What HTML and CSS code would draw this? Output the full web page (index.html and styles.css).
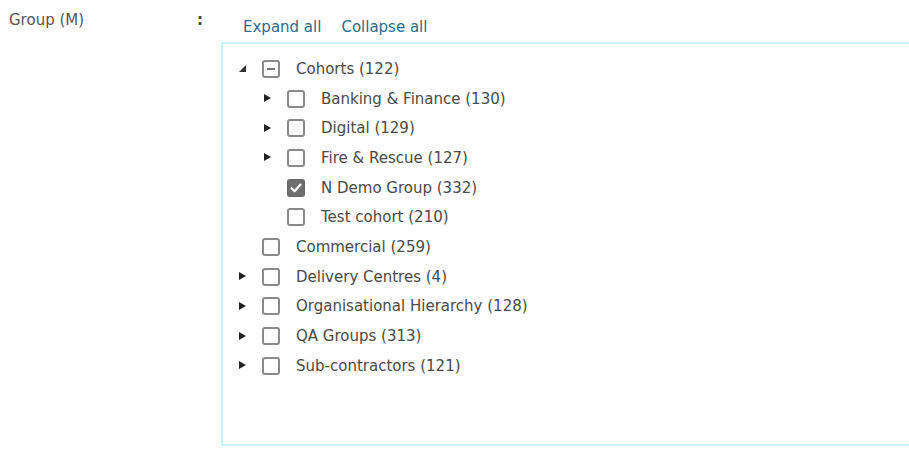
FILE: index.html
```html
<!DOCTYPE html>
<html>
<head>
<meta charset="utf-8">
<link rel="stylesheet" href="styles.css">
</head>
<body>
<div class="field">
  <div class="label">Group (M)</div>
  <div class="colon">:</div>
  <div class="content">
    <div class="links"><a class="link">Expand all</a><a class="link">Collapse all</a></div>
    <div class="tree-box">
      <ul class="tree">
        <li>
          <div class="node"><span class="tog open"></span><span class="cb partial"></span><span class="txt">Cohorts (122)</span></div>
          <ul class="tree sub">
            <li><div class="node"><span class="tog closed"></span><span class="cb"></span><span class="txt">Banking &amp; Finance (130)</span></div></li>
            <li><div class="node"><span class="tog closed"></span><span class="cb"></span><span class="txt">Digital (129)</span></div></li>
            <li><div class="node"><span class="tog closed"></span><span class="cb"></span><span class="txt">Fire &amp; Rescue (127)</span></div></li>
            <li><div class="node"><span class="tog"></span><span class="cb checked"><svg viewBox="0 0 18 18" width="18" height="18"><path d="M4.5 9.2 L7.6 12.3 L13.5 5.6" fill="none" stroke="#fff" stroke-width="2.2" stroke-linecap="round" stroke-linejoin="round"/></svg></span><span class="txt">N Demo Group (332)</span></div></li>
            <li><div class="node"><span class="tog"></span><span class="cb"></span><span class="txt">Test cohort (210)</span></div></li>
          </ul>
        </li>
        <li><div class="node"><span class="tog"></span><span class="cb"></span><span class="txt">Commercial (259)</span></div></li>
        <li><div class="node"><span class="tog closed"></span><span class="cb"></span><span class="txt">Delivery Centres (4)</span></div></li>
        <li><div class="node"><span class="tog closed"></span><span class="cb"></span><span class="txt">Organisational Hierarchy (128)</span></div></li>
        <li><div class="node"><span class="tog closed"></span><span class="cb"></span><span class="txt">QA Groups (313)</span></div></li>
        <li><div class="node"><span class="tog closed"></span><span class="cb"></span><span class="txt">Sub-contractors (121)</span></div></li>
      </ul>
    </div>
  </div>
</div>
</body>
</html>
```
FILE: styles.css
```css
html, body {
  margin: 0;
  padding: 0;
  background: #fff;
  overflow: hidden;
}
body {
  font-family: "DejaVu Sans", Verdana, sans-serif;
  font-size: 15px;
  color: #4a4a4a;
}
.field {
  display: grid;
  grid-template-columns: 188px 24px 1fr;
  padding-left: 9px;
  padding-top: 10px;
}
.label {
  color: #555;
  line-height: 20px;
}
.colon {
  color: #444;
  font-weight: bold;
  line-height: 20px;
}
.content {
  margin-right: -30px;
}
.links {
  display: flex;
  gap: 20px;
  padding-left: 22px;
  padding-top: 7px;
  height: 25px;
  line-height: 20px;
}
.link {
  color: #2b6b92;
  cursor: pointer;
}
.tree-box {
  border: 2px solid #cdeefb;
  height: 390px;
  padding-top: 10px;
  box-sizing: content-box;
}
.tree {
  list-style: none;
  margin: 0;
  padding: 0 0 0 14px;
}
.tree.sub {
  padding-left: 25px;
}
.node {
  display: flex;
  align-items: center;
  height: 29.7px;
}
.tog {
  width: 11px;
  height: 11px;
  margin-right: 14px;
  position: relative;
}
.tog.closed::before {
  content: "";
  position: absolute;
  left: 2px;
  top: 1px;
  border-left: 7px solid #222;
  border-top: 4.5px solid transparent;
  border-bottom: 4.5px solid transparent;
}
.tog.open::before {
  content: "";
  position: absolute;
  left: 2px;
  top: 2px;
  border-right: 7px solid #333;
  border-top: 7px solid transparent;
}
.cb {
  width: 14px;
  height: 14px;
  border: 2px solid #8a8a8a;
  border-radius: 3px;
  margin-right: 16px;
  position: relative;
  background: #fff;
  display: flex;
  align-items: center;
  justify-content: center;
}
.cb.partial::before {
  content: "";
  width: 8px;
  height: 2px;
  background: #777;
}
.cb.checked {
  background: #707070;
  border-color: #6a6a6a;
}
.cb.checked svg {
  position: absolute;
  left: -2px;
  top: -2px;
}
.txt {
  white-space: nowrap;
}
```
